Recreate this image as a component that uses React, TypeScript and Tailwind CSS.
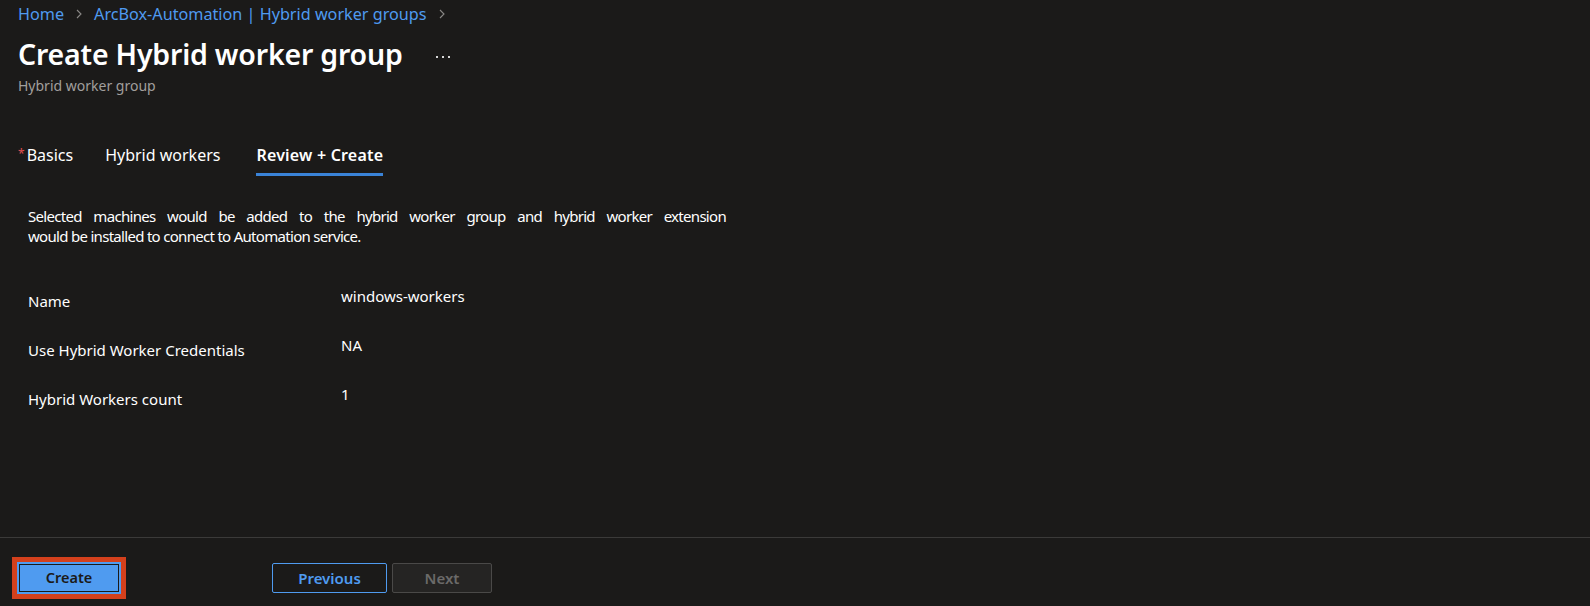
import React from "react";

const font = { fontFamily: '"Noto Sans", "Open Sans", sans-serif' };

function Chevron() {
  return (
    <svg width="12" height="12" viewBox="0 0 12 12" className="mx-[9px]">
      <path d="M4 2 L8 6 L4 10" stroke="#8a8886" strokeWidth="1.1" fill="none" />
    </svg>
  );
}

function Ellipsis() {
  return (
    <svg width="16" height="4" viewBox="0 0 16 4" className="ml-[33px] mt-[4px]">
      <rect x="0" y="1" width="2" height="2" fill="#d8d8d8" />
      <rect x="6" y="1" width="2" height="2" fill="#d8d8d8" />
      <rect x="12" y="1" width="2" height="2" fill="#d8d8d8" />
    </svg>
  );
}

export default function App() {
  return (
    <div
      className="w-[1590px] h-[606px] bg-[#1b1a19] text-white flex flex-col overflow-hidden"
      style={font}
    >
      <div className="flex-1 pl-[18px]">
        <div className="flex items-center h-[28px] text-[16.2px] text-[#4f9bf0]">
          <span>Home</span>
          <Chevron />
          <span>ArcBox-Automation | Hybrid worker groups</span>
          <Chevron />
        </div>
        <div className="flex items-center h-[46px] pt-[7px]">
          <h1 className="text-[28.5px] font-semibold leading-none tracking-[-0.2px]">
            Create Hybrid worker group
          </h1>
          <Ellipsis />
        </div>
        <div className="mt-[3px] text-[14px] text-[#a19f9d] leading-[18px]">Hybrid worker group</div>

        <div className="flex mt-[50px] h-[31px] text-[16px]">
          <div className="flex items-start h-full">
            <span className="text-[#e05050] text-[12px] leading-none mt-[3px] mr-[2px]">*</span>
            <span className="leading-[20px]">Basics</span>
          </div>
          <div className="ml-[32px] h-full leading-[20px]">Hybrid workers</div>
          <div className="ml-[36px] h-full flex flex-col">
            <span className="leading-[20px] font-semibold tracking-[0.2px]">Review + Create</span>
            <div className="mt-auto h-[3px] bg-[#3a83d8]" />
          </div>
        </div>

        <div className="pl-[10px]">
          <div className="mt-[30px] w-[698px] text-[15px] leading-[20px] tracking-[-0.7px]">
            <div className="text-justify [text-align-last:justify] whitespace-nowrap">
              Selected machines would be added to the hybrid worker group and hybrid worker extension
            </div>
            <div>would be installed to connect to Automation service.</div>
          </div>

          <div className="mt-[39px] flex flex-col text-[15px]">
            {[
              ["Name", "windows-workers"],
              ["Use Hybrid Worker Credentials", "NA"],
              ["Hybrid Workers count", "1"],
            ].map(([k, v]) => (
              <div key={k} className="flex h-[49px]">
                <div className="w-[313px] pt-[6px] leading-[20px]">{k}</div>
                <div className="pt-[1px] leading-[20px]">{v}</div>
              </div>
            ))}
          </div>
        </div>
      </div>

      <div className="h-[69px] border-t border-[#3b3a39] flex items-start pl-[12px] pt-[19px]">
        <div className="border-[5px] border-[#d4401c] w-[114px] h-[42px]">
          <button className="w-full h-full bg-[#4f9bf0] p-[2px]">
            <div className="w-full h-full border border-[#1b1a19] flex items-center justify-center text-[14.5px] font-semibold text-[#1b1a19]">
              Create
            </div>
          </button>
        </div>
        <button className="ml-[146px] mt-[6px] w-[115px] h-[30px] border border-[#4f9bf0] rounded-[2px] text-[15px] font-semibold text-[#4f9bf0] flex items-center justify-center">
          Previous
        </button>
        <button className="ml-[5px] mt-[6px] w-[100px] h-[30px] border border-[#4a4948] bg-[#252423] rounded-[2px] text-[15px] font-semibold text-[#6b6a69] flex items-center justify-center">
          Next
        </button>
      </div>
    </div>
  );
}
